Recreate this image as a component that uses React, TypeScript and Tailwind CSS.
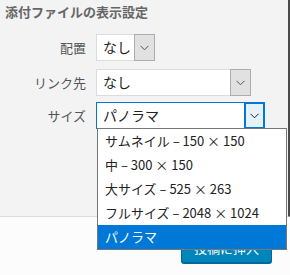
import React from "react";

const font = { fontFamily: '"Noto Sans CJK JP", "Noto Sans", sans-serif' };

function Chevron({ color = "#444" }: { color?: string }) {
  return (
    <svg width="9" height="6" viewBox="0 0 9 6" fill="none">
      <path d="M0.5 0.8 L4.5 4.8 L8.5 0.8" stroke={color} strokeWidth="1" />
    </svg>
  );
}

function Select({ value, width, focused }: { value: string; width: string; focused?: boolean }) {
  return (
    <div
      className={`flex h-[27px] items-stretch bg-white ${width} ${
        focused ? "border border-[#0078d7]" : "border border-[#dcdcdc]"
      }`}
    >
      <div className="flex flex-1 items-center pl-[6px] text-[14px] text-[#222]">{value}</div>
      {focused ? (
        <div className="flex w-[21px] items-center justify-center border-2 border-[#0078d7] bg-[#e5f1fb] -my-px -mr-px">
          <Chevron color="#222" />
        </div>
      ) : (
        <div className="flex w-[21px] items-center justify-center border border-[#adadad] bg-[#e1e1e1] -my-px -mr-px">
          <Chevron color="#555" />
        </div>
      )}
    </div>
  );
}

export default function App() {
  const items = [
    "サムネイル – 150 × 150",
    "中 – 300 × 150",
    "大サイズ – 525 × 263",
    "フルサイズ – 2048 × 1024",
    "パノラマ",
  ];
  return (
    <div className="relative h-[275px] w-[290px] overflow-hidden bg-[#fcfcfc]" style={font}>
      <div className="h-[217px] border-b border-[#dddddd] border-r-2 border-r-[#4a4a4a] bg-[#f3f3f3]">
        <div className="pl-[5px] pt-[3px] text-[13px] font-bold leading-[18px] text-[#666]">
          添付ファイルの表示設定
        </div>
        <div className="mt-[13px] grid grid-cols-[86px_1fr] items-center gap-x-[10px]">
          <div className="text-right text-[13px] text-[#555]">配置</div>
          <Select value="なし" width="w-[59px]" />
          <div className="mt-[8px] text-right text-[13px] text-[#555]">リンク先</div>
          <div className="mt-[8px]">
            <Select value="なし" width="w-[155px]" />
          </div>
          <div className="mt-[6px] text-right text-[13px] text-[#555]">サイズ</div>
          <div className="mt-[6px]">
            <Select value="パノラマ" width="w-[169px]" focused />
          </div>
        </div>
      </div>
      <div className="flex justify-end pr-[18px] pt-[16px]">
        <div className="flex h-[30px] w-[91px] items-center justify-center rounded-[3px] border border-[#006799] bg-[#0085ba] text-[13px] text-white shadow-[0_1px_0_#006799]">
          投稿に挿入
        </div>
      </div>
      <div className="absolute left-[97px] top-[128px] w-[190px] border border-[#767676] bg-white">
        {items.map((t, i) => (
          <div
            key={t}
            className={`flex h-[24px] items-center pl-[7px] text-[13px] ${
              i === 4 ? "bg-[#0078d7] text-white" : "text-[#222]"
            }`}
          >
            {t}
          </div>
        ))}
      </div>
    </div>
  );
}
